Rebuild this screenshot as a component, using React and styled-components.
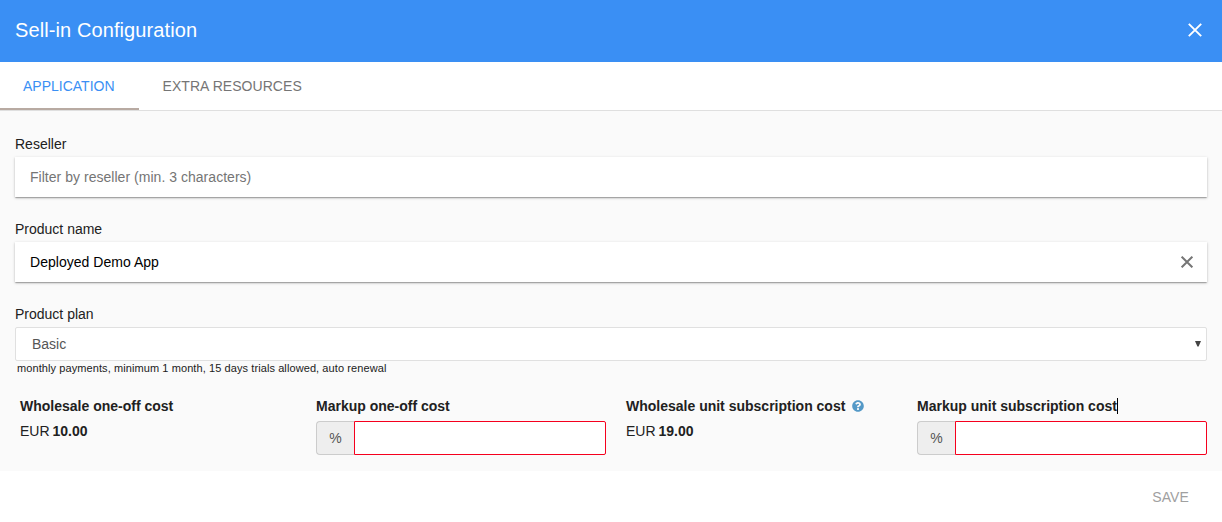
import React from "react";
import styled, { createGlobalStyle } from "styled-components";
import { FaQuestionCircle } from "react-icons/fa";

const GlobalStyle = createGlobalStyle`
  *, *::before, *::after { box-sizing: border-box; }
  body {
    margin: 0;
    background: #fff;
    color: #212121;
    font: 14px/20px "Liberation Sans", Arial, sans-serif;
  }
  button, input { font: inherit; }
`;

const Dialog = styled.div`
  display: flex;
  flex-direction: column;
  height: 522px;
  overflow: hidden;
`;

const Header = styled.header`
  display: flex;
  align-items: center;
  justify-content: space-between;
  flex: none;
  height: 62px;
  padding: 0 20px 2px 15px;
  background: #3a8ff4;
  color: #fff;
`;

const Title = styled.h2`
  margin: 0;
  font-size: 20px;
  font-weight: 400;
  line-height: 28px;
  letter-spacing: 0.1px;
`;

const IconButton = styled.button`
  display: flex;
  padding: 0;
  border: 0;
  background: none;
  color: inherit;
`;

const Tabs = styled.nav`
  display: flex;
  flex: none;
  height: 49px;
  border-bottom: 1px solid #dfdfdf;
`;

const Tab = styled.button`
  padding: ${(p) => (p.$active ? 2 : 0)}px 24px 0;
  padding-left: ${(p) => (p.$active ? 23 : 24)}px;
  border: 0;
  border-bottom: ${(p) => (p.$active ? "2px solid #b8aaa2" : "0")};
  background: none;
  color: ${(p) => (p.$active ? "#3a8ff4" : "#757575")};
  letter-spacing: ${(p) => (p.$active ? 0 : 0.05)}px;
  text-transform: uppercase;
`;

const Content = styled.main`
  flex: none;
  height: 360px;
  padding: 23px 15px 0;
  background: #fafafa;
`;

const Field = styled.div`
  display: flex;
  flex-direction: column;
  gap: 3px;
  margin-bottom: ${(p) => p.$gap}px;
`;

const SearchBox = styled.div`
  display: flex;
  align-items: center;
  height: 40px;
  padding: 0 14px 0 15px;
  background: #fff;
  color: #757575;
  box-shadow: 0 1px 3px rgba(0, 0, 0, 0.2), 0 1px 1px rgba(0, 0, 0, 0.14),
    0 2px 1px -1px rgba(0, 0, 0, 0.12);
`;

const SearchInput = styled.input`
  flex: 1;
  height: 40px;
  padding: 0;
  border: 0;
  outline: 0;
  background: none;
  color: #000;
  letter-spacing: 0.03px;
  &::placeholder { color: #757575; opacity: 1; }
`;

const Select = styled.div`
  display: flex;
  align-items: center;
  justify-content: space-between;
  height: 34px;
  padding: 0 5px 0 16px;
  border: 1px solid #e0e0e0;
  border-radius: 2px;
  background: #fff;
  color: #555;
`;

const Note = styled.div`
  padding-left: 2px;
  font-size: 11px;
  line-height: 15px;
  letter-spacing: 0.088px;
`;

const Costs = styled.div`
  display: grid;
  grid-template-columns: 296px 290px 311px 290px;
  padding-left: 5px;
  margin-top: 20px;
`;

const Cost = styled.div`
  margin-left: ${(p) => p.$indent || 0}px;
`;

const CostLabel = styled.div`
  display: flex;
  align-items: center;
  height: 20px;
  font-weight: 700;
  white-space: nowrap;
`;

const HelpIcon = styled(FaQuestionCircle)`
  margin-left: 7px;
  color: #5499c7;
`;

const Caret = styled.i`
  width: 1px;
  height: 16px;
  background: #000;
`;

const Price = styled.div`
  margin-top: 5px;
  word-spacing: -1px;
`;

const InputGroup = styled.div`
  display: flex;
  height: 34px;
  margin-top: 5px;
`;

const Addon = styled.span`
  display: flex;
  align-items: center;
  justify-content: center;
  width: 38px;
  border: 1px solid #ccc;
  border-right: 0;
  border-radius: 4px 0 0 4px;
  background: #eee;
  color: #555;
`;

const AmountInput = styled.input`
  flex: 1;
  min-width: 0;
  border: 1px solid #f5001d;
  border-radius: 0 2px 2px 0;
  outline: 0;
  background: #fff;
`;

const Footer = styled.footer`
  display: flex;
  align-items: center;
  justify-content: flex-end;
  flex: 1;
  padding-right: 33px;
`;

const SaveButton = styled.button`
  padding: 0;
  border: 0;
  background: none;
  color: #a0a0a0;
  letter-spacing: 0.1px;
`;

const Cross = ({ size, weight }) => (
  <svg width={size} height={size} viewBox="0 0 14 14" stroke="currentColor" strokeWidth={weight}>
    <path d="M.8.8 13.2 13.2M13.2.8.8 13.2" />
  </svg>
);

const DownArrow = () => (
  <svg width="6" height="6" viewBox="0 0 6 6" fill="#444">
    <path d="M0 0h6L3.6 5.6H2.4z" />
  </svg>
);

const MarkupCost = ({ label, caret }) => (
  <Cost>
    <CostLabel>
      {label}
      {caret && <Caret />}
    </CostLabel>
    <InputGroup>
      <Addon>%</Addon>
      <AmountInput aria-label={label} />
    </InputGroup>
  </Cost>
);

export default function App() {
  return (
    <Dialog>
      <GlobalStyle />
      <Header>
        <Title>Sell-in Configuration</Title>
        <IconButton aria-label="Close">
          <Cross size={14} weight={1.9} />
        </IconButton>
      </Header>
      <Tabs>
        <Tab $active>Application</Tab>
        <Tab>Extra resources</Tab>
      </Tabs>
      <Content>
        <Field $gap={22}>
          <label>Reseller</label>
          <SearchBox>
            <SearchInput placeholder="Filter by reseller (min. 3 characters)" />
          </SearchBox>
        </Field>
        <Field $gap={22}>
          <label>Product name</label>
          <SearchBox>
            <SearchInput defaultValue="Deployed Demo App" />
            <IconButton aria-label="Clear">
              <Cross size={12} weight={2.3} />
            </IconButton>
          </SearchBox>
        </Field>
        <Field $gap={0}>
          <label>Product plan</label>
          <Select>
            Basic
            <DownArrow />
          </Select>
        </Field>
        <Note>monthly payments, minimum 1 month, 15 days trials allowed, auto renewal</Note>
        <Costs>
          <Cost>
            <CostLabel>Wholesale one-off cost</CostLabel>
            <Price>
              EUR <b>10.00</b>
            </Price>
          </Cost>
          <MarkupCost label="Markup one-off cost" />
          <Cost $indent={20}>
            <CostLabel>
              Wholesale unit subscription cost
              <HelpIcon size={12} />
            </CostLabel>
            <Price>
              EUR <b>19.00</b>
            </Price>
          </Cost>
          <MarkupCost label="Markup unit subscription cost" caret />
        </Costs>
      </Content>
      <Footer>
        <SaveButton>SAVE</SaveButton>
      </Footer>
    </Dialog>
  );
}
